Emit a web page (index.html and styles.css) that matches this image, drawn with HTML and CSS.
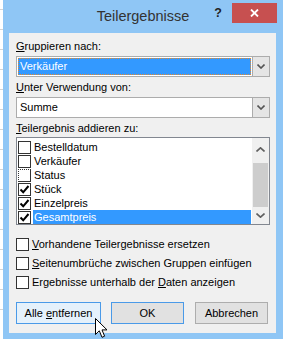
FILE: index.html
```html
<!DOCTYPE html>
<html lang="de">
<head>
<meta charset="utf-8">
<title>Teilergebnisse</title>
<link rel="stylesheet" href="styles.css">
</head>
<body>
<div class="screen">
  <div class="window">
    <div class="titlebar">
      <div></div>
      <div class="title">Teilergebnisse</div>
      <div class="controls">
        <span class="help">?</span>
        <div class="close">
          <svg width="9" height="8" viewBox="0 0 9 8"><path d="M1 0.5 L8 7.5 M8 0.5 L1 7.5" stroke="#fff" stroke-width="1.8" fill="none"/></svg>
        </div>
      </div>
    </div>
    <div class="client">
      <div class="lbl lbl-1"><u>G</u>ruppieren nach:</div>
      <div class="combo">
        <div class="combo-value"><span class="sel">Verkäufer</span></div>
        <div class="combo-btn"><svg width="8" height="5" viewBox="0 0 8 5"><path d="M0.5 0.5 L4 4 L7.5 0.5" stroke="#555" stroke-width="1.6" fill="none"/></svg></div>
      </div>
      <div class="lbl lbl-2"><u>U</u>nter Verwendung von:</div>
      <div class="combo">
        <div class="combo-value"><span class="plain">Summe</span></div>
        <div class="combo-btn"><svg width="8" height="5" viewBox="0 0 8 5"><path d="M0.5 0.5 L4 4 L7.5 0.5" stroke="#555" stroke-width="1.6" fill="none"/></svg></div>
      </div>
      <div class="lbl lbl-3"><u>T</u>eilergebnis addieren zu:</div>
      <div class="listbox">
        <div class="items">
          <div class="item"><span class="box"></span><span class="txt">Bestelldatum</span></div>
          <div class="item"><span class="box"></span><span class="txt">Verkäufer</span></div>
          <div class="item"><span class="box box-focus"></span><span class="txt">Status</span></div>
          <div class="item"><span class="box"><svg width="11" height="11" viewBox="0 0 11 11"><path d="M1.5 5.5 L4.2 8.3 L9.5 2" stroke="#000" stroke-width="2" fill="none"/></svg></span><span class="txt">Stück</span></div>
          <div class="item"><span class="box"><svg width="11" height="11" viewBox="0 0 11 11"><path d="M1.5 5.5 L4.2 8.3 L9.5 2" stroke="#000" stroke-width="2" fill="none"/></svg></span><span class="txt">Einzelpreis</span></div>
          <div class="item"><span class="box"><svg width="11" height="11" viewBox="0 0 11 11"><path d="M1.5 5.5 L4.2 8.3 L9.5 2" stroke="#000" stroke-width="2" fill="none"/></svg></span><span class="txt selected">Gesamtpreis</span></div>
        </div>
        <div class="scrollbar">
          <div class="sb-up"><svg width="9" height="5" viewBox="0 0 9 5"><path d="M0.5 4.5 L4.5 0.8 L8.5 4.5" stroke="#606060" stroke-width="1.6" fill="none"/></svg></div>
          <div class="sb-track"><div class="sb-thumb"></div></div>
          <div class="sb-down"><svg width="9" height="5" viewBox="0 0 9 5"><path d="M0.5 0.5 L4.5 4.2 L8.5 0.5" stroke="#606060" stroke-width="1.6" fill="none"/></svg></div>
        </div>
      </div>
      <div class="opt opt-first"><span class="box"></span><span class="opt-txt"><u>V</u>orhandene Teilergebnisse ersetzen</span></div>
      <div class="opt"><span class="box"></span><span class="opt-txt"><u>S</u>eitenumbrüche zwischen Gruppen einfügen</span></div>
      <div class="opt"><span class="box"></span><span class="opt-txt">Ergebnisse unterhalb der <u>D</u>aten anzeigen</span></div>
      <div class="buttons">
        <button class="btn btn-hover">Alle <u>e</u>ntfernen</button>
        <button class="btn btn-default">OK</button>
        <button class="btn btn-cancel">Abbrechen</button>
      </div>
    </div>
  </div>
  <svg class="cursor" width="13" height="21" viewBox="0 0 13 21"><path d="M0.5 0.5 L0.5 16.5 L4.3 12.8 L7 19.3 L9.6 18.2 L7 11.9 L12 11.9 Z" fill="#fff" stroke="#000" stroke-width="1" stroke-linejoin="miter"/></svg>
</div>
</body>
</html>
```
FILE: styles.css
```css
* { box-sizing: border-box; }
html, body { margin: 0; padding: 0; }
body {
  width: 283px;
  height: 339px;
  overflow: hidden;
  font-family: "Liberation Sans", Arial, sans-serif;
  font-size: 11px;
  color: #000;
}
u { text-decoration: underline; text-underline-offset: 1px; }

.screen {
  position: relative;
  display: flex;
  width: 283px;
  height: 339px;
  padding-left: 3px;
  background-color: #fff;
  background-image: repeating-linear-gradient(to bottom, transparent 0 19px, #d4d4d4 19px 20px);
  background-position: 0 -10px;
}

.window {
  flex: 1;
  display: flex;
  flex-direction: column;
  background: #8fc6f5;
}

.titlebar {
  height: 33px;
  flex: none;
  display: grid;
  grid-template-columns: 1fr auto 1fr;
}
.title {
  font-size: 14.5px;
  line-height: 20px;
  padding-top: 6px;
  color: #333;
}
.controls {
  display: flex;
  justify-content: flex-end;
  align-items: flex-start;
}
.help {
  font-weight: bold;
  font-size: 12.5px;
  line-height: 13px;
  margin-top: 7px;
  margin-right: 10px;
  color: #222;
}
.close {
  width: 45px;
  height: 20px;
  margin-top: 3px;
  margin-right: 6px;
  background: #c75050;
  display: flex;
  align-items: center;
  justify-content: center;
}

.client {
  flex: 1;
  margin: 0 7px 6px 6px;
  background: #f0f0f0;
  padding: 6px 6px 0 7px;
  display: flex;
  flex-direction: column;
}

.lbl {
  height: 15px;
  line-height: 15px;
  white-space: nowrap;
}
.lbl-1 { margin-bottom: 2px; }
.lbl-2 { margin-top: 3px; margin-bottom: 2px; }
.lbl-3 { margin-top: 3px; margin-bottom: 1px; }

.combo {
  display: flex;
  height: 21px;
  border: 1px solid #acacac;
  background: #fff;
}
.combo-value {
  flex: 1;
  padding: 1px;
  display: flex;
}
.sel {
  flex: 1;
  background: #3399ff;
  color: #fff;
  border: 1px dotted #e8892a;
  padding-left: 1px;
  line-height: 15px;
}
.plain {
  padding-left: 2px;
  line-height: 17px;
}
.combo-btn {
  width: 17px;
  flex: none;
  background: #e5e5e5;
  border-left: 1px solid #acacac;
  display: flex;
  align-items: center;
  justify-content: center;
}

.listbox {
  height: 88px;
  border: 1px solid #828790;
  background: #fff;
  display: flex;
}
.items {
  flex: 1;
  padding: 2px 1px 0 1px;
}
.item {
  height: 14px;
  display: flex;
  align-items: flex-start;
}
.item .box { margin-top: 1px; }
.txt {
  flex: 1;
  margin-left: 2px;
  padding-left: 1px;
  height: 14px;
  line-height: 14px;
}
.txt.selected {
  background: #3399ff;
  color: #fff;
}

.box {
  width: 13px;
  height: 13px;
  flex: none;
  border: 1px solid #333;
  background: #fff;
  display: flex;
  align-items: center;
  justify-content: center;
}
.box-focus { border-left-style: dotted; border-top-style: dotted; }

.scrollbar {
  width: 17px;
  flex: none;
  background: #f0f0f0;
  display: flex;
  flex-direction: column;
}
.sb-up {
  height: 20px;
  display: flex;
  align-items: center;
  justify-content: center;
  padding-top: 2px;
}
.sb-track {
  flex: 1;
  padding: 5px 1px 0 1px;
  display: flex;
}
.sb-thumb {
  flex: 1;
  background: #cdcdcd;
}
.sb-down {
  height: 17px;
  display: flex;
  align-items: center;
  justify-content: center;
}

.opt {
  display: flex;
  align-items: center;
  height: 15px;
  margin-top: 4px;
  white-space: nowrap;
}
.opt-first { margin-top: 12px; }
.opt-txt { margin-left: 3px; line-height: 15px; }

.buttons {
  display: flex;
  margin-top: 12px;
}
.btn {
  height: 22px;
  border: 1px solid #adadad;
  background: #e1e1e1;
  font: inherit;
  color: #000;
  padding: 0;
  text-align: center;
  line-height: 20px;
}
.btn-hover {
  width: 85px;
  background: #e5f1fb;
  border-color: #4a9ae8;
}
.btn-default {
  width: 73px;
  margin-left: 10px;
  border-color: #4a9ae8;
}
.btn-cancel {
  width: 73px;
  margin-left: 11px;
}

.cursor {
  position: absolute;
  left: 95px;
  top: 318px;
}
```
